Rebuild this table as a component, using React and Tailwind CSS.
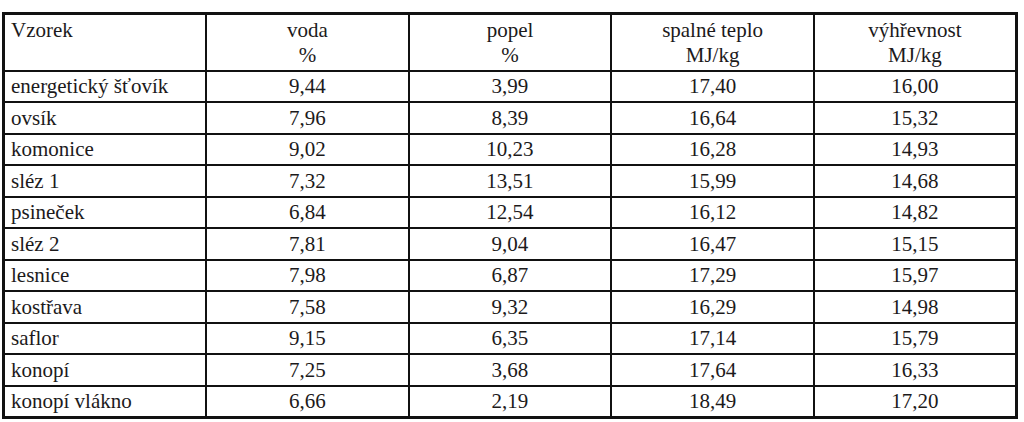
const rows = [
  ['energetický šťovík', '9,44', '3,99', '17,40', '16,00'],
  ['ovsík', '7,96', '8,39', '16,64', '15,32'],
  ['komonice', '9,02', '10,23', '16,28', '14,93'],
  ['sléz 1', '7,32', '13,51', '15,99', '14,68'],
  ['psineček', '6,84', '12,54', '16,12', '14,82'],
  ['sléz 2', '7,81', '9,04', '16,47', '15,15'],
  ['lesnice', '7,98', '6,87', '17,29', '15,97'],
  ['kostřava', '7,58', '9,32', '16,29', '14,98'],
  ['saflor', '9,15', '6,35', '17,14', '15,79'],
  ['konopí', '7,25', '3,68', '17,64', '16,33'],
  ['konopí vlákno', '6,66', '2,19', '18,49', '17,20'],
];

const headers = [
  ['voda', '%'],
  ['popel', '%'],
  ['spalné teplo', 'MJ/kg'],
  ['výhřevnost', 'MJ/kg'],
];

export default function App() {
  return (
    <div className="w-[1024px] h-[422px] bg-white pt-[12px] pl-[2px] text-[#1c1a1b] text-[21px] font-['Liberation_Serif',serif]">
      <table className="w-[1016px] table-fixed border-collapse border-[3px] border-[#111]">
        <thead>
          <tr className="h-[57px]">
            <th className="border-2 border-[#111] font-normal text-left align-top px-[6px] pt-[3px] leading-[25px]">
              Vzorek
            </th>
            {headers.map(([a, b]) => (
              <th
                key={a}
                className="border-2 border-[#111] font-normal text-center align-top pt-[3px] leading-[25px]"
              >
                <div>{a}</div>
                <div>{b}</div>
              </th>
            ))}
          </tr>
        </thead>
        <tbody>
          {rows.map((r) => (
            <tr key={r[0]} className="h-[31.5px]">
              <td className="border-2 border-[#111] px-[6px] leading-[24px]">{r[0]}</td>
              {r.slice(1).map((v, i) => (
                <td key={i} className="border-2 border-[#111] text-center leading-[24px]">
                  {v}
                </td>
              ))}
            </tr>
          ))}
        </tbody>
      </table>
    </div>
  );
}
